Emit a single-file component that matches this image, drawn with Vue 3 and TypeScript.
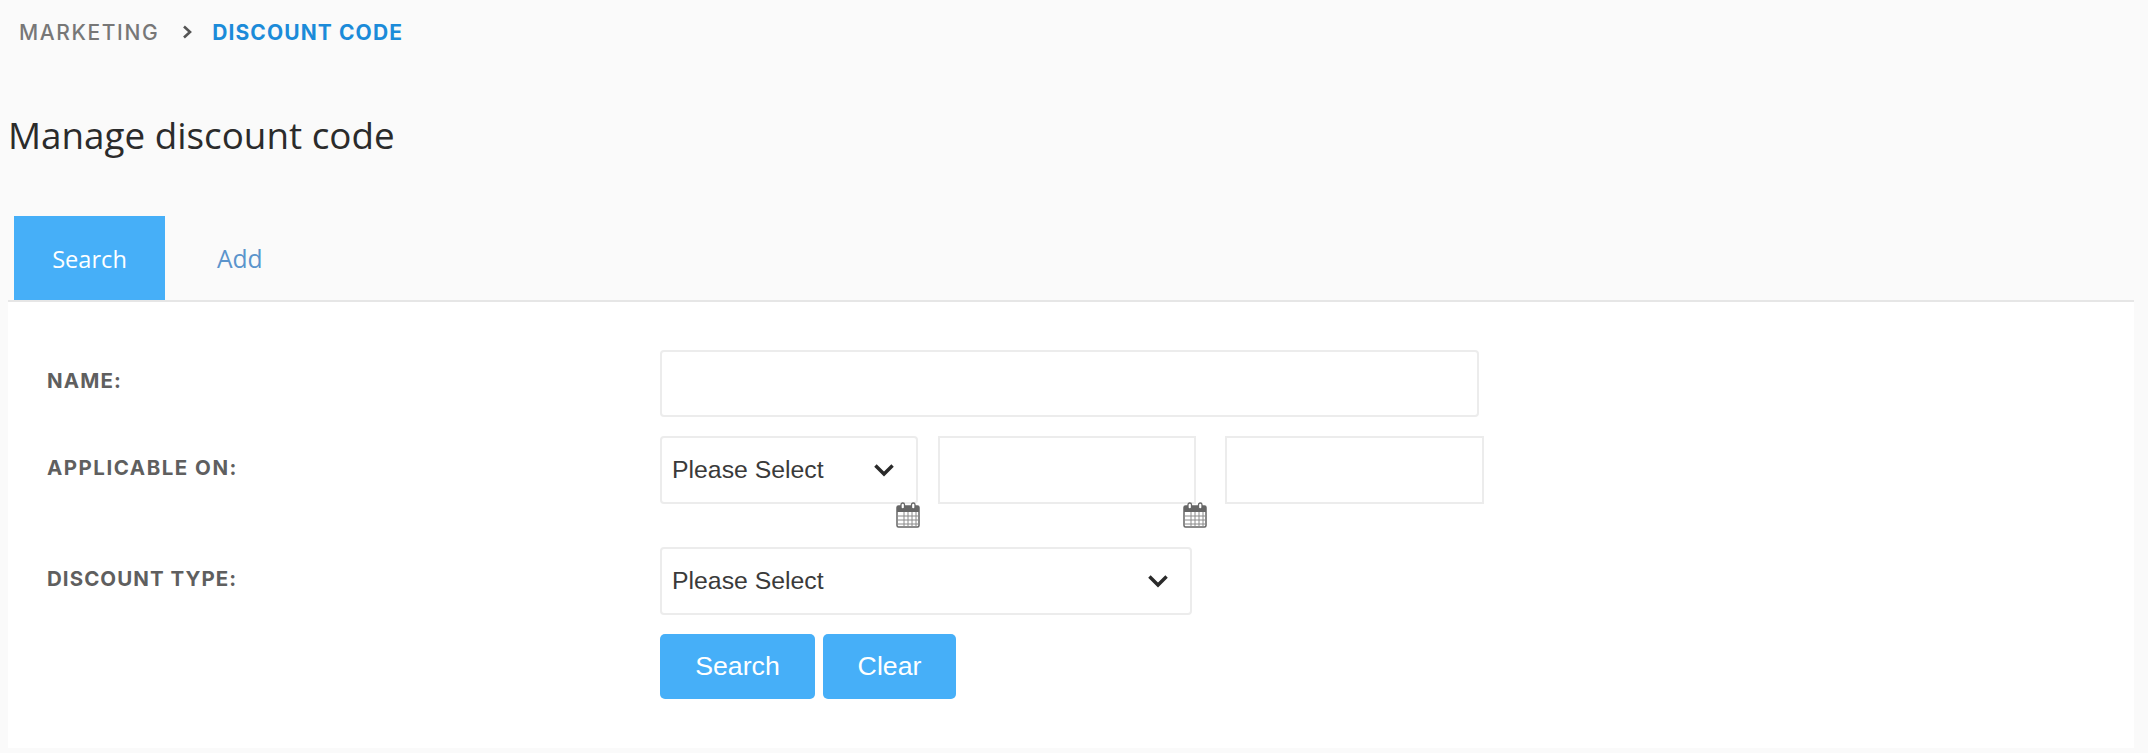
<script setup lang="ts">
const calendarColumns: number[] = [8, 12, 16, 20]
const calendarRows: number[] = [14, 18, 22]
</script>

<template>
  <main class="page">
    <nav class="crumbs">
      <span class="crumb">MARKETING</span>
      <svg class="crumb-sep" viewBox="0 0 12 16" aria-hidden="true">
        <path d="M3 2.5 9 8l-6 5.5" />
      </svg>
      <span class="crumb current">DISCOUNT CODE</span>
    </nav>

    <h1 class="title">Manage discount code</h1>

    <div class="tabs">
      <span class="tab active">Search</span>
      <span class="tab">Add</span>
    </div>

    <form class="panel" @submit.prevent>
      <div class="row name-row">
        <label class="label">NAME:</label>
        <input class="control name-input" type="text" />
      </div>

      <div class="row applicable-row">
        <label class="label">APPLICABLE ON:</label>
        <div class="fields">
          <div class="field select-wrap short">
            <select class="control select"><option>Please Select</option></select>
            <svg class="chevron" viewBox="0 0 20 14" aria-hidden="true"><path d="M2.5 3l7.5 7.5L17.5 3" /></svg>
            <svg class="calendar" viewBox="0 0 24 26" aria-hidden="true">
              <rect x="1" y="4" width="22" height="21" rx="1.5" class="cal-frame" />
              <rect x="1" y="4" width="22" height="6" class="cal-head" />
              <path v-for="x in calendarColumns" :key="'x' + x" :d="`M${x} 10v14`" class="cal-line" />
              <path v-for="y in calendarRows" :key="'y' + y" :d="`M2 ${y}h20`" class="cal-line" />
              <rect x="5" y="1" width="3.5" height="6" rx="1.7" class="cal-ring" />
              <rect x="15.5" y="1" width="3.5" height="6" rx="1.7" class="cal-ring" />
            </svg>
          </div>
          <div class="field date-one">
            <input class="control square" type="text" />
            <svg class="calendar" viewBox="0 0 24 26" aria-hidden="true">
              <rect x="1" y="4" width="22" height="21" rx="1.5" class="cal-frame" />
              <rect x="1" y="4" width="22" height="6" class="cal-head" />
              <path v-for="x in calendarColumns" :key="'x' + x" :d="`M${x} 10v14`" class="cal-line" />
              <path v-for="y in calendarRows" :key="'y' + y" :d="`M2 ${y}h20`" class="cal-line" />
              <rect x="5" y="1" width="3.5" height="6" rx="1.7" class="cal-ring" />
              <rect x="15.5" y="1" width="3.5" height="6" rx="1.7" class="cal-ring" />
            </svg>
          </div>
          <div class="field date-two">
            <input class="control square" type="text" />
          </div>
        </div>
      </div>

      <div class="row type-row">
        <label class="label">DISCOUNT TYPE:</label>
        <div class="field select-wrap long">
          <select class="control select"><option>Please Select</option></select>
          <svg class="chevron" viewBox="0 0 20 14" aria-hidden="true"><path d="M2.5 3l7.5 7.5L17.5 3" /></svg>
        </div>
      </div>

      <div class="actions">
        <button class="btn search" type="submit">Search</button>
        <button class="btn clear" type="button">Clear</button>
      </div>
    </form>
  </main>
</template>

<style>
html, body { margin: 0; background: #fafafa; }
</style>

<style scoped>
.page {
  height: 753px;
  box-sizing: border-box;
  overflow: hidden;
  padding-left: 8px;
  padding-right: 14px;
  background: #fafafa;
}
.crumbs {
  display: flex;
  align-items: center;
  height: 64px;
  padding-left: 11px;
  font-family: Inter, "Noto Sans", sans-serif;
  font-size: 21px;
}
.crumb { color: #777; font-weight: 500; letter-spacing: 1.6px; }
.crumb.current { color: #1b8bd9; font-weight: 700; letter-spacing: 1.1px; }
.crumb-sep { width: 12px; height: 16px; margin: 0 19px 0 22px; }
.crumb-sep path { fill: none; stroke: #555; stroke-width: 2.6; }
.title {
  margin: 47px 0 0;
  font-family: "Open Sans", sans-serif;
  font-size: 36.8px;
  line-height: 48px;
  font-weight: 400;
  color: #2b2b2b;
}
.tabs {
  display: flex;
  margin-top: 57px;
  padding-left: 6px;
  height: 84px;
}
.tab {
  display: flex;
  align-items: center;
  justify-content: center;
  padding: 1px 39px 0 52px;
  font-family: "Open Sans", sans-serif;
  font-size: 24.6px;
  color: #5b94cc;
}
.tab.active {
  width: 151px;
  box-sizing: border-box;
  padding: 1px 0 0;
  font-size: 23.6px;
  background: #46aff8;
  color: #fff;
}
.panel {
  height: 448px;
  box-sizing: border-box;
  border-top: 2px solid #e6e6e6;
  background: #fff;
  padding: 48px 0 0 39px;
}
.row { display: flex; }
.label {
  width: 613px;
  flex: none;
  font-family: Inter, "Noto Sans", sans-serif;
  font-size: 20.5px;
  font-weight: 700;
  letter-spacing: 1.05px;
  line-height: 63px;
  color: #5f5f5f;
}
.name-row .label { line-height: 61px; letter-spacing: 1.15px; }
.applicable-row .label { letter-spacing: 1.5px; }
.control {
  display: block;
  box-sizing: border-box;
  width: 100%;
  height: 100%;
  background: #fff;
  border: 2px solid #ececec;
  border-radius: 4px;
  outline: none;
  font-family: "Liberation Sans", Arial, sans-serif;
  font-size: 24.8px;
  color: #3a3a3a;
}
.name-row { height: 67px; }
.name-input { width: 819px; }
.applicable-row { height: 68px; margin-top: 19px; }
.type-row { height: 68px; margin-top: 43px; }
.fields { display: flex; }
.field { position: relative; height: 100%; }
.short { width: 258px; }
.date-one { width: 258px; margin-left: 20px; }
.date-two { width: 259px; margin-left: 29px; }
.long { width: 532px; }
.square { border-radius: 0; }
.select {
  appearance: none;
  padding: 0 40px 2px 10px;
}
.chevron {
  position: absolute;
  right: 22px;
  top: 50%;
  width: 24px;
  height: 16px;
  margin-top: -8px;
  pointer-events: none;
}
.chevron path { fill: none; stroke: #2a2a2a; stroke-width: 3; }
.calendar {
  position: absolute;
  right: -2px;
  top: 66px;
  width: 24px;
  height: 26px;
}
.date-one .calendar { right: -11px; }
.cal-frame { fill: #fff; stroke: #666; stroke-width: 1.5; }
.cal-head { fill: #666; }
.cal-line { fill: none; stroke: #8a8a8a; stroke-width: 1; }
.cal-ring { fill: #fff; stroke: #666; stroke-width: 1.3; }
.actions {
  display: flex;
  gap: 8px;
  margin: 19px 0 0 613px;
}
.btn {
  height: 65px;
  padding: 0;
  border: 0;
  border-radius: 5px;
  background: #46aff8;
  color: #fff;
  font-family: "Liberation Sans", Arial, sans-serif;
  font-size: 26.7px;
}
.search { width: 155px; }
.clear { width: 133px; }
</style>
